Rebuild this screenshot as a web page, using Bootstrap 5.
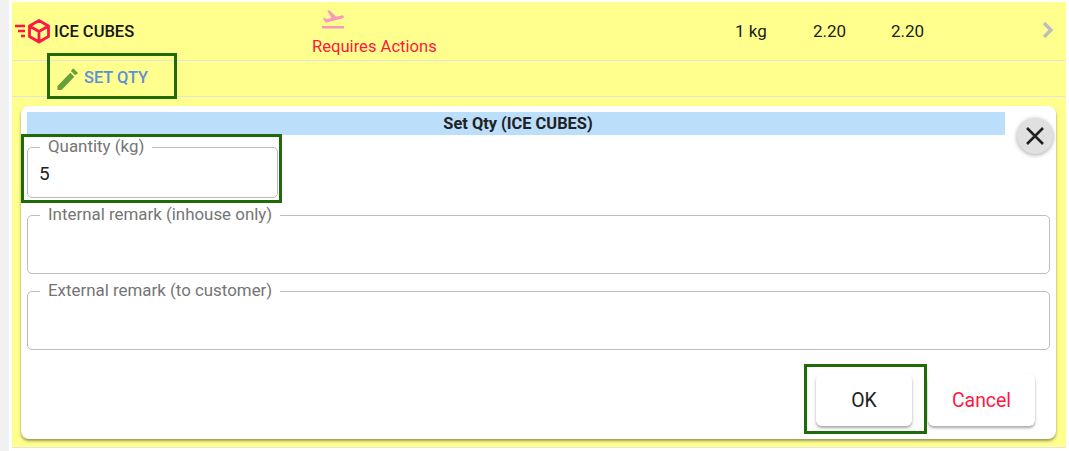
<!DOCTYPE html>
<html lang="en">
<head>
    <meta charset="UTF-8">
    <meta name="viewport" content="width=device-width, initial-scale=1.0">
    <title>Set Qty</title>
    <link href="https://cdn.jsdelivr.net/npm/bootstrap@5.3.3/dist/css/bootstrap.min.css" rel="stylesheet">
    <style>
        html, body { height: 451px; overflow: hidden; }
        body { background: #f1f1f1; font-family: Roboto, "Liberation Sans", sans-serif; color: #212121; }
        .page-wrap { margin-left: 9px; padding-left: 3px; padding-right: 3px; background: #fff; height: 451px; padding-top: 2px; }
        .order-row { background: #ffff8d; height: 58px; }
        .sub-row { background: #ffff8d; height: 37px; border-top: 1px solid #e3e3e8; border-bottom: 1px solid #e3e3e8; }
        .edit-area { background: #ffff8d; height: 351px; padding: 9px 10px 8px 9px; border-bottom: 1px solid #e3e3e8; }
        .item-name { width: 260px; padding: 2px 0 0 2px; font-size: 16.5px; font-weight: 500; color: #161616; }
        .status-col { width: 125px; padding-top: 2px; color: #ff1744; font-size: 16.6px; line-height: 19px; gap: 7px; white-space: nowrap; }
        .status-icon { margin-left: 9px; }
        .num-col { width: 78px; padding-top: 2px; font-size: 17px; }
        .first-num { margin-left: auto; }
        .row-chevron { margin-left: 72px; margin-right: 11px; margin-bottom: 2px; }
        .action-link { font-size: 16.4px; font-weight: 500; color: #5c8fdc; margin-left: 44px; }
        .dialog-card { position: relative; background: #fff; height: 333px; border-radius: 8px; box-shadow: 0 2px 3px rgba(0,0,0,.4); padding: 6px 6px 0; }
        .dialog-title { width: 978px; height: 23px; padding-left: 4px; background: #bbdefb; font-size: 16.4px; font-weight: 700; line-height: 23px; text-align: center; color: #212121; }
        .out-field { border: 1px solid #bdbdbd; border-radius: 5px; padding: 0 12px; margin: 0; }
        .out-field legend { float: none; width: auto; font-size: 16.9px; line-height: 18px; margin: 0; padding: 0 8px 2px; color: #757575; }
        .out-field input { border: 0; outline: 0; width: 100%; background: transparent; font-size: 19px; color: #212121; padding: 0 0 8px; margin-left: -1px; display: block; height: 40px; }
        .qty-field { width: 251px; margin-top: 2px; }
        .wide-field { margin-top: 7px; }
        .wide-field input { height: 48px; }
        .close-btn { position: absolute; top: 12px; right: 3px; width: 36px; height: 36px; border: 0; border-radius: 50%; background: #e0e0e0; box-shadow: 0 1px 4px rgba(0,0,0,.35); padding: 0; display: flex; align-items: center; justify-content: center; }
        .dialog-actions { margin-top: 24px; padding-right: 15px; gap: 16px; }
        .raise-btn { height: 52px; border: 0; padding-top: 3px; border-radius: 6px; background: #fff; box-shadow: 0 2px 3px rgba(0,0,0,.35); font-size: 19.4px; }
        .ok-btn { width: 96px; color: #212121; }
        .cancel-btn { width: 107px; color: #ff1744; }
        .mark-box { position: absolute; border: 3px solid #1e6b08; pointer-events: none; }
        .mark-action { left: 47px; top: 53px; width: 130px; height: 46px; }
        .mark-qty { left: 21px; top: 134px; width: 261px; height: 69px; }
        .mark-ok { left: 804px; top: 364px; width: 123px; height: 70px; }
    </style>
</head>
<body>
    <div class="page-wrap">
        <div class="order-row d-flex align-items-center">
            <svg width="40" height="26" viewBox="0 0 40 26" class="flex-shrink-0" fill="none" stroke="#ff1744">
                <path d="M3 8h10M6 13h7M9 18h4" stroke-width="2.400"/>
                <path d="M27 2.500l9.500 5.500v10.500L27 24l-9.500-5.500V8zM17.500 8L27 13.500 36.500 8M27 13.500V24" stroke-width="2.800" stroke-linejoin="round"/>
            </svg>
            <div class="item-name">ICE CUBES</div>
            <div class="status-col d-flex flex-column align-items-start">
                <svg class="status-icon" width="24" height="22" viewBox="0 0 24 22" fill="#fb97bd">
                    <path d="M1 18h22v2.400H1zM22.800 8.700c-.3-1-1.300-1.600-2.300-1.300l-5.300 1.400L8.300 2.300l-2 .5 4.200 7.200-5 1.300-2-1.500-1.500.4 2.700 4.600 17-4.600c1-.3 1.400-1.200 1.100-1.500z"/>
                </svg>
                <span>Requires Actions</span>
            </div>
            <div class="num-col first-num">1 kg</div>
            <div class="num-col">2.20</div>
            <div class="num-col">2.20</div>
            <svg class="row-chevron flex-shrink-0" width="14" height="18" viewBox="0 0 14 18" fill="none" stroke="#bdbdbd" stroke-width="3.400">
                <path d="M3 2l7 7-7 7"/>
            </svg>
        </div>
        <div class="sub-row d-flex align-items-center">
            <div class="action-link d-flex align-items-center gap-1">
                <svg width="24" height="24" viewBox="0 0 24 24" fill="#689f38"><path d="M1.500 20v4h4L18.300 10.700l-4-4zM21.500 8.100c.4-.4.400-1.100 0-1.500l-3.500-3.500c-.4-.4-1.100-.4-1.500 0l-1.600 1.800 4 4z"/></svg>
                <span>SET QTY</span>
            </div>
        </div>
        <div class="edit-area">
            <div class="dialog-card">
                <div class="dialog-title">Set Qty (ICE CUBES)</div>
                <button class="close-btn" type="button" aria-label="Close">
                    <svg width="20" height="20" viewBox="0 0 20 20" stroke="#212121" stroke-width="2.500"><path d="M2 2l16 16M18 2L2 18"/></svg>
                </button>
                <fieldset class="out-field qty-field">
                    <legend>Quantity (kg)</legend>
                    <input type="text" value="5">
                </fieldset>
                <fieldset class="out-field wide-field">
                    <legend>Internal remark (inhouse only)</legend>
                    <input type="text">
                </fieldset>
                <fieldset class="out-field wide-field">
                    <legend>External remark (to customer)</legend>
                    <input type="text">
                </fieldset>
                <div class="dialog-actions d-flex justify-content-end">
                    <button type="button" class="raise-btn ok-btn">OK</button>
                    <button type="button" class="raise-btn cancel-btn">Cancel</button>
                </div>
            </div>
        </div>
    </div>
    <div class="mark-box mark-action"></div>
    <div class="mark-box mark-qty"></div>
    <div class="mark-box mark-ok"></div>
    <script src="https://cdn.jsdelivr.net/npm/bootstrap@5.3.3/dist/js/bootstrap.bundle.min.js"></script>
</body>
</html>
